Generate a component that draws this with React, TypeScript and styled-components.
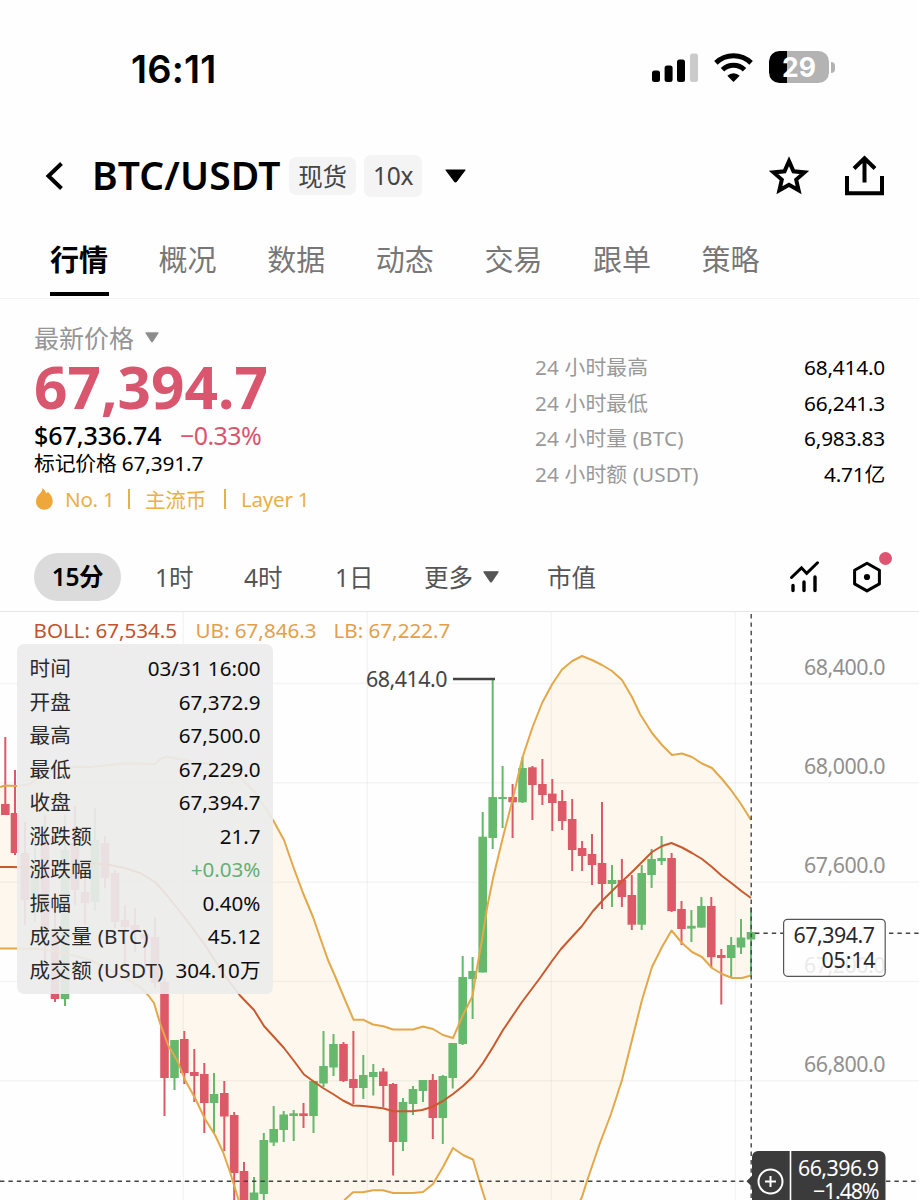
import React from "react";
import styled, { createGlobalStyle } from "styled-components";

const latin = `"Noto Sans", "Noto Sans CJK SC", sans-serif`;
const PINK = "#d9566f";
const UP = "#65b86c";
const DOWN = "#dc5a68";
const BAND = "#e3a849";
const MID = "#c85a2d";

const Global = createGlobalStyle`
  * { box-sizing: border-box; }
  body { margin: 0; background: #fefefe; font-family: ${latin}; }
`;

const Screen = styled.main`
  width: 919px;
  height: 1200px;
  overflow: hidden;
  display: flex;
  flex-direction: column;
  background: #fefefe;
  color: #000;
  white-space: nowrap;
`;

const StatusBar = styled.header`
  height: 136px;
  display: flex;
  align-items: center;
  justify-content: space-between;
  padding: 0 90px 0 131px;
`;

const Clock = styled.span`
  padding-top: 1px;
  font: 600 38px/40px Inter, sans-serif;
  letter-spacing: 0.2px;
`;

const StatusIcons = styled.div`
  display: flex;
  align-items: center;
  gap: 16px;
`;

const Battery = styled.div`
  position: relative;
  width: 60px;
  height: 32px;
  margin-top: -2px;
  border-radius: 10.5px;
  background: linear-gradient(90deg, #000 18px, #b3b3b3 18px);
  color: #fff;
  text-align: center;
  font: 700 26.5px/32px Inter, sans-serif;
  &::after {
    content: "";
    position: absolute;
    left: 62px;
    top: 11px;
    width: 3.5px;
    height: 11px;
    border-radius: 0 5px 5px 0;
    background: #b3b3b3;
  }
`;

const TitleBar = styled.div`
  height: 80px;
  display: flex;
  align-items: center;
  padding: 0 35px 1px 45px;
`;

const Pair = styled.h1`
  margin: 0 10px 0 28px;
  width: 187px;
  padding-bottom: 2px;
  font: 600 39px/50px ${latin};
  letter-spacing: 0.1px;
`;

const Badge = styled.span<{ $w: number; $h: number }>`
  width: ${(p) => p.$w}px;
  height: ${(p) => p.$h}px;
  margin-right: 8px;
  padding-bottom: 1px;
  border-radius: 7px;
  background: #f4f4f4;
  color: #444;
  display: flex;
  align-items: center;
  justify-content: center;
  font-size: 24.5px;
  letter-spacing: -0.3px;
`;

const HeaderCaret = styled.span`
  display: flex;
  margin-left: 15px;
`;

const Actions = styled.div`
  margin-left: auto;
  display: flex;
  gap: 36px;
`;

const Tabs = styled.nav`
  height: 83px;
  display: flex;
  gap: 50px;
  padding-left: 50px;
  border-bottom: 1px solid #f2f2f2;
`;

const Tab = styled.a<{ $active?: boolean }>`
  width: 58.6px;
  height: 80px;
  padding-top: 22px;
  font-size: 29px;
  line-height: 44px;
  font-weight: ${(p) => (p.$active ? 700 : 400)};
  color: ${(p) => (p.$active ? "#000" : "#777")};
  border-bottom: 4px solid ${(p) => (p.$active ? "#000" : "transparent")};
`;

const Summary = styled.section`
  height: 243px;
  display: flex;
  justify-content: space-between;
  padding: 21px 34px 0;
`;

const PriceColumn = styled.div`
  display: flex;
  flex-direction: column;
`;

const PriceLabel = styled.div`
  display: flex;
  align-items: center;
  gap: 11px;
  height: 34px;
  font-size: 25px;
  color: #959595;
`;

const Price = styled.div`
  height: 67px;
  font-size: 58.5px;
  line-height: 65px;
  font-weight: 700;
  letter-spacing: 0;
  color: ${PINK};
`;

const Fiat = styled.div`
  display: flex;
  gap: 18.5px;
  height: 29px;
  line-height: 29px;
  font-size: 25px;
  font-weight: 500;
  letter-spacing: -0.05px;
`;

const Change = styled.span`
  color: ${PINK};
  font-weight: 400;
  letter-spacing: -0.6px;
`;

const Mark = styled.div`
  height: 28px;
  line-height: 27px;
  font-size: 20.8px;
  letter-spacing: -0.15px;
`;

const Tags = styled.div`
  display: flex;
  align-items: center;
  height: 42px;
  font-size: 20.6px;
  letter-spacing: -0.25px;
  color: #e9b045;
`;

const TagText = styled.span<{ $w: number }>`
  width: ${(p) => p.$w}px;
`;

const TagRule = styled.i`
  width: 2px;
  height: 20px;
  margin: 0 15.5px;
  background: #e9b045;
`;

const Stats = styled.dl`
  width: 350px;
  margin: 30px 0 0;
`;

const Stat = styled.div`
  display: flex;
  justify-content: space-between;
  height: 35.5px;
  line-height: 35px;
  font-size: 20.8px;
`;

const StatName = styled.dt`
  color: #999;
  letter-spacing: 0.1px;
`;

const StatValue = styled.dd`
  margin: 0;
  letter-spacing: -0.2px;
`;

const Periods = styled.nav`
  height: 70px;
  display: flex;
  align-items: center;
  padding: 0 37px 0 34px;
  border-bottom: 1px solid #e6e6e6;
  font-size: 24.5px;
  color: #555;
`;

const ActivePeriod = styled.span`
  width: 87px;
  height: 48px;
  border-radius: 24px;
  background: #dbdbdb;
  color: #000;
  font-weight: 600;
  line-height: 47px;
  text-align: center;
  letter-spacing: -0.3px;
`;

const Period = styled.span<{ $left: number; $w: number }>`
  margin-left: ${(p) => p.$left}px;
  width: ${(p) => p.$w}px;
  display: flex;
  align-items: center;
  gap: 10px;
`;

const ChartTools = styled.div`
  margin-left: auto;
  display: flex;
  gap: 32px;
`;

const ToolWithDot = styled.span`
  position: relative;
  display: flex;
  &::after {
    content: "";
    position: absolute;
    right: -10px;
    top: -9px;
    width: 13px;
    height: 13px;
    border-radius: 50%;
    background: #dc5573;
  }
`;

const ChartArea = styled.section`
  position: relative;
  height: 588px;
  svg { display: block; }
`;

const Legend = styled.div`
  position: absolute;
  left: 33.5px;
  top: 4px;
  display: flex;
  height: 28px;
  line-height: 28px;
  font-size: 20.6px;
`;

const LegendItem = styled.span<{ $color: string; $w: number }>`
  width: ${(p) => p.$w}px;
  color: ${(p) => p.$color};
`;

const Panel = styled.div`
  position: absolute;
  left: 17px;
  top: 32px;
  width: 256px;
  height: 350px;
  padding: 8px 12.5px 0;
  border-radius: 7px;
  background: rgba(236, 236, 236, 0.92);
`;

const PanelRow = styled.div`
  display: flex;
  justify-content: space-between;
  height: 33.5px;
  line-height: 33.5px;
  font-size: 20.6px;
  color: #2a2a2a;
`;

const PanelName = styled.span`
  letter-spacing: 0.25px;
`;

const PanelValue = styled.span<{ $color?: string }>`
  color: ${(p) => p.$color ?? "#0c0c0c"};
`;

const Caret = ({ w, h, color }: { w: number; h: number; color: string }) => (
  <svg width={w} height={h} viewBox="0 0 20 14" preserveAspectRatio="none">
    <path d="M1 1h18L10.8 12.4q-.8 1-1.6 0Z" fill={color} stroke={color} strokeWidth="1.2" strokeLinejoin="round" />
  </svg>
);

// center x, wick top, body top, body bottom, wick bottom, rising
type Candle = [number, number, number, number, number, 0 | 1];
const candles: Candle[] = [
  [5.3, 737, 804, 815, 815, 0], [15, 770, 813, 853, 855, 0], [25, 822, 853, 900, 925, 0],
  [35, 835, 868, 900, 922, 1], [45, 815, 840, 935, 960, 0], [55, 900, 932, 999, 1002, 0],
  [65, 815, 850, 999, 1006, 1], [75, 806, 843, 890, 905, 0], [85, 878, 892, 903, 925, 0],
  [95, 808, 840, 902, 911, 1], [105, 836, 843, 878, 888, 0], [115, 870, 873, 922, 928, 0],
  [125, 905, 920, 927, 965, 0], [135, 908, 925, 932, 952, 0], [145, 930, 934, 939, 975, 0],
  [155, 917, 937, 983, 988, 0], [164.5, 978, 982, 1078, 1116, 0], [174.5, 1040, 1040, 1078, 1090, 1],
  [184.3, 1031, 1039, 1073, 1084, 0], [194.3, 1049, 1072, 1076, 1102, 0], [204.3, 1063, 1074, 1103, 1133, 0],
  [214, 1073, 1094, 1103, 1134, 1], [224.3, 1081, 1093, 1116.5, 1151, 0], [234.2, 1112, 1115, 1173, 1204, 0],
  [244, 1162, 1171, 1210, 1210, 0], [254, 1177, 1192.5, 1210, 1210, 1], [263.8, 1133, 1140, 1194, 1210, 1],
  [273.7, 1106, 1129, 1142.5, 1146, 1], [283.7, 1111, 1114.5, 1130, 1142, 1], [293.7, 1110, 1113.3, 1116, 1141, 1],
  [303.5, 1103, 1113.3, 1116, 1128, 0], [313.5, 1081, 1081, 1116, 1133, 1], [323.5, 1031, 1066, 1083.5, 1087, 1],
  [333.5, 1034, 1044, 1067.5, 1076, 1], [343.5, 1042, 1044, 1081, 1082, 0], [353.4, 1031, 1079, 1088, 1104, 0],
  [363.3, 1055, 1075, 1088, 1099, 1], [373.3, 1064, 1072, 1077, 1095.5, 1], [383.3, 1068, 1071.5, 1086, 1107, 0],
  [393.1, 1083, 1084, 1142, 1175.5, 0], [403, 1098, 1102, 1142, 1151, 1], [413, 1086, 1089, 1104, 1115, 1],
  [423, 1080, 1080, 1091, 1102, 1], [432.8, 1074, 1080, 1118, 1139, 0], [442.8, 1075, 1076, 1118, 1144, 1],
  [452.7, 1043, 1043, 1078, 1088.5, 1], [462.7, 956, 977, 1044, 1045, 1], [472.6, 957, 971, 979, 1019, 1],
  [482.7, 812, 836.7, 972.5, 972.5, 1], [492.7, 679, 797, 838, 849, 1], [502.6, 766, 797, 799, 828, 1],
  [512.6, 784, 797, 802.3, 838, 0], [522.5, 757, 768, 802.3, 803, 1], [532.4, 766, 767.3, 785, 820, 0],
  [542.4, 759, 784, 795, 805, 0], [552.3, 779, 793.6, 803, 831, 0], [562.2, 790, 801, 821, 830, 0],
  [572.2, 799, 819, 850, 871, 0], [582.1, 841, 848, 856, 871, 0], [592, 834, 854, 865, 885, 0],
  [602, 802, 863, 884, 909, 0], [612, 865, 880, 884, 907, 1], [621.9, 859, 880, 897, 907, 0],
  [631.8, 875, 895, 924.7, 930, 0], [641.7, 865, 873, 924.7, 930, 1], [651.6, 849, 859, 875, 888, 1],
  [661.6, 836, 858, 861, 865, 1], [671.6, 853, 858, 911, 912, 0], [681.5, 901, 909, 929, 945, 0],
  [691.4, 910, 925.8, 928.6, 942, 1], [701.4, 897, 906, 927.6, 927.6, 1], [711.3, 897, 906, 957.2, 968, 0],
  [721.3, 949, 955, 958, 1004.5, 0], [731.2, 937, 945, 958, 978, 1], [741, 919, 937.5, 947.5, 954, 1],
  [751, 907, 932, 939.5, 977, 1],
];

const upper =
  "0,787 5,785.5 17,786 30,784 45,772 60,768 75,767 90,767 110,765 125,763.5 155,764 160,759 167,756.5 178,759 195,762 215,764 235,772 255,792 273,820 284,840 293,866 303,893 313,917 322,943 328,960 335,976 340,988 353.5,1019.7 363,1019.7 373,1024.5 383.5,1026.3 393,1029.5 413,1029.5 423,1026.5 433,1029 443,1035 453,1038 463,1015 472.5,996 477,968 482,940 487,908 493.3,877 503,837 512.5,800 522.3,758 532.4,727.5 542.3,702.5 552,684.5 562,669.5 572.3,661 582,656 592,660 602,665 612,671 622,680 632,697 640,714 652,733 662,745 672,755 682,753.5 692,757 702,763.5 712,768 722,779 731,790 741,804 751,820";
const middle =
  "0,867 12,867 30,867.5 60,864 90,863 110,865 125,868 140,873 155,882 165,893 185,918 205,945 225,976 240,995.5 254,1010 264,1026 274,1037 284,1048 294,1061 304,1074.5 313,1081 323,1088 333,1094 343,1100.5 353,1105.5 363,1106 383,1108.3 393,1111.3 412,1111.3 422,1110 432,1107 443,1101 453,1094 463,1086 473,1076.5 483,1063 493,1047 503,1030 522,1002 540,978 552,961 561,949 571,938 582,926 593,911 603,900 613,890 632,872 642,862 652,852 662,846 671.5,843 682,847.5 692,853 702,859 712,867 722,876 732,883.5 742,891.5 751,898";
const lower =
  "0,948.5 17,948.5 40,949 60,952 90,960 120,975 140,987 148,995 154,1003 160,1023 168,1045 178,1062 185,1080 195,1098 205,1119 215,1135 223,1152 230,1172 238,1198 243,1215 335,1215 345,1199.5 353,1192.3 363,1192.3 373,1190.3 383,1190.3 393,1193 413,1193 423,1192 433,1184 443,1167 453,1148 463,1155 473,1159.5 479,1180 485,1199 490,1215 573,1215 582,1197 587,1181 600,1143 611,1114 622,1080 632,1040 642,1000 652,967 662,947 671.5,930.5 682,943 692,952 702,957 712,968 722,974 732,978 742,978 751,975.5";
const band = `${upper} ${lower.split(" ").reverse().join(" ")}`;

const axis: [string, number][] = [
  ["68,400.0", 683.5], ["68,000.0", 782.7], ["67,600.0", 882.2], ["67,200.0", 981.5], ["66,800.0", 1080.8],
];

const Label = styled.text<{ $color: string }>`
  font: 400 21.4px ${latin};
  fill: ${(p) => p.$color};
`;

const Chart = () => (
  <svg width="919" height="588" viewBox="0 612 919 588">
    <polygon points={band} fill="#fef7ee" />
    {axis.map(([t, y]) => (
      <line key={t} x1="0" x2="919" y1={y} y2={y} stroke="#000" strokeOpacity=".04" strokeWidth="1.4" />
    ))}
    {[183.3, 367.3, 551.4, 735.4].map((x) => (
      <line key={x} x1={x} x2={x} y1="612" y2="1200" stroke="#000" strokeOpacity=".04" strokeWidth="1.4" />
    ))}
    {candles.map(([x, t, a, b, l, up]) => (
      <g key={x} fill={up ? UP : DOWN}>
        <rect x={x - 1} y={t} width="2" height={l - t} />
        <rect x={x - 4.3} y={a} width="8.6" height={b - a} />
      </g>
    ))}
    <g fill="none" strokeWidth="2" strokeLinejoin="round">
      <polyline points={upper} stroke={BAND} />
      <polyline points={lower} stroke={BAND} />
      <polyline points={middle} stroke={MID} />
    </g>
    <path d="M453 679h42" stroke="#444" strokeWidth="2.4" />
    <Label $color="#444" x="366" y="686.5" textLength="81.5">68,414.0</Label>
    {axis.map(([t, y]) => (
      <Label key={t} $color="#909090" x="804" y={y - 9} textLength="81.5">{t}</Label>
    ))}
    <g stroke="#444" strokeWidth="1.4" strokeDasharray="4.4 4">
      <path d="M751.2 614V1200" />
      <path d="M755 933.3H783M889 933.3H919" />
      <path d="M0 1181.3H750M886 1181.3H919" />
    </g>
    <rect x="783.6" y="919.3" width="101.6" height="57" rx="4" fill="#fefefe" fillOpacity=".82" stroke="#555" strokeWidth="1.2" />
    <Label $color="#2a2a2a" x="793.5" y="942.5" textLength="81.5">67,394.7</Label>
    <Label $color="#2a2a2a" x="821.5" y="967.5" textLength="54">05:14</Label>
    <path d="M746.5 1181.3l6-6v12Z" fill="#3b3b3b" />
    <path d="M752 1210v-53a6 6 0 0 1 6-6h121.5a6 6 0 0 1 6 6v53Z" fill="#3b3b3b" />
    <path d="M790.5 1151v49" stroke="#fff" strokeWidth="1.6" />
    <g fill="none" stroke="#fff" strokeWidth="2">
      <circle cx="770.5" cy="1181.5" r="12" />
      <path d="M765 1181.5h11M770.5 1176v11" />
    </g>
    <Label $color="#fff" x="798" y="1175.5" textLength="81">66,396.9</Label>
    <Label $color="#fff" x="813" y="1199" textLength="66.5">−1.48%</Label>
  </svg>
);

const tabs = ["行情", "概况", "数据", "动态", "交易", "跟单", "策略"];
const stats = [
  ["24 小时最高", "68,414.0"],
  ["24 小时最低", "66,241.3"],
  ["24 小时量 (BTC)", "6,983.83"],
  ["24 小时额 (USDT)", "4.71亿"],
];
const details: [string, string, string?][] = [
  ["时间", "03/31 16:00"],
  ["开盘", "67,372.9"],
  ["最高", "67,500.0"],
  ["最低", "67,229.0"],
  ["收盘", "67,394.7"],
  ["涨跌额", "21.7"],
  ["涨跌幅", "+0.03%", "#63b076"],
  ["振幅", "0.40%"],
  ["成交量 (BTC)", "45.12"],
  ["成交额 (USDT)", "304.10万"],
];

export default function App() {
  return (
    <Screen>
      <Global />
      <StatusBar>
        <Clock>16:11</Clock>
        <StatusIcons>
          <svg width="46" height="30" viewBox="0 0 46 30">
            <rect x="0" y="17.5" width="8" height="11.5" rx="2.5" />
            <rect x="12.6" y="12.5" width="8" height="16.5" rx="2.5" />
            <rect x="25" y="6.5" width="8" height="22.5" rx="2.5" />
            <rect x="38" y=".5" width="8" height="28.5" rx="2.5" fill="#cbcbcb" />
          </svg>
          <svg width="39" height="30" viewBox="0 0 39 30">
            <g fill="none" stroke="#000" strokeWidth="5">
              <path d="M1.9 9.9a25.3 25.3 0 0 1 35.2 0" />
              <path d="M8.5 16.8a15.8 15.8 0 0 1 22 0" />
            </g>
            <path d="M19.5 29l-6.2-6.200a8.800 8.800 0 0 1 12.4 0Z" />
          </svg>
          <Battery>29</Battery>
        </StatusIcons>
      </StatusBar>

      <TitleBar>
        <svg width="19" height="28" viewBox="0 0 19 28">
          <path d="M16.5 1.5 3.5 14l13 12.5" fill="none" stroke="#000" strokeWidth="4" />
        </svg>
        <Pair>BTC/USDT</Pair>
        <Badge $w={67} $h={38}>现货</Badge>
        <Badge $w={58} $h={42}>10x</Badge>
        <HeaderCaret>
          <Caret w={21} h={14} color="#000" />
        </HeaderCaret>
        <Actions>
          <svg width="40" height="42" viewBox="0 0 40 42">
            <path
              d="M20 5.300l4.500 10.200 10.900 1.100-8.200 7.200 2.400 10.700L20 28.900l-9.600 5.600 2.400-10.700-8.200-7.200 10.900-1.100Z"
              transform="translate(0 .8)"
              fill="none"
              stroke="#000"
              strokeWidth="4"
              strokeMiterlimit="10"
            />
          </svg>
          <svg width="39" height="42" viewBox="0 0 39 42">
            <path d="M2 21v17.300h35V21M19.500 27.500V3.500M9 13.500 19.500 3.300 30 13.500" fill="none" stroke="#000" strokeWidth="4" />
          </svg>
        </Actions>
      </TitleBar>

      <Tabs>
        {tabs.map((t, i) => (
          <Tab key={t} $active={i === 0}>{t}</Tab>
        ))}
      </Tabs>

      <Summary>
        <PriceColumn>
          <PriceLabel>
            最新价格
            <Caret w={14} h={11} color="#8c8c8c" />
          </PriceLabel>
          <Price>67,394.7</Price>
          <Fiat>
            <span>$67,336.74</span>
            <Change>−0.33%</Change>
          </Fiat>
          <Mark>标记价格 67,391.7</Mark>
          <Tags>
            <svg width="31" height="24" viewBox="0 0 31 24">
              <path
                d="M8.500 1c2 1.700 3 3.300 3.700 5.300.9-.2 1.300-.8 1.600-1.500 3.300 3.200 4.900 6 4.900 9.300 0 5-3.500 8.600-8.400 8.600S2 19.200 2 14.500c0-3.600 1.800-5.600 3.700-7.700C7.200 5.100 8.300 3.400 8.500 1Z"
                fill="#efa73c"
              />
            </svg>
            <TagText $w={47}>No. 1</TagText>
            <TagRule />
            <TagText $w={63}>主流币</TagText>
            <TagRule />
            <TagText $w={70}>Layer 1</TagText>
          </Tags>
        </PriceColumn>
        <Stats>
          {stats.map(([k, v]) => (
            <Stat key={k}>
              <StatName>{k}</StatName>
              <StatValue>{v}</StatValue>
            </Stat>
          ))}
        </Stats>
      </Summary>

      <Periods>
        <ActivePeriod>15分</ActivePeriod>
        <Period $left={34} $w={38}>1时</Period>
        <Period $left={51} $w={39}>4时</Period>
        <Period $left={52} $w={37}>1日</Period>
        <Period $left={52} $w={75}>
          更多
          <Caret w={16} h={12} color="#555" />
        </Period>
        <Period $left={48} $w={50}>市值</Period>
        <ChartTools>
          <svg width="31" height="32" viewBox="0 0 31 32">
            <g fill="none" stroke="#000">
              <path d="M2.500 16.500 12.500 6.800l5.200 5.600L28.500 1.800" strokeWidth="3" strokeLinecap="round" />
              <path d="M4 24.500v5M15 21v8.500M26 16v13.500" strokeWidth="3.400" strokeLinecap="round" />
            </g>
          </svg>
          <ToolWithDot>
            <svg width="30" height="32" viewBox="0 0 30 32">
              <path d="M15 2.200 27.400 9.300v13.600L15 29.900 2.600 22.900V9.300Z" fill="none" stroke="#000" strokeWidth="3" strokeLinejoin="round" />
              <circle cx="15" cy="16" r="3.100" />
            </svg>
          </ToolWithDot>
        </ChartTools>
      </Periods>

      <ChartArea>
        <Chart />
        <Legend>
          <LegendItem $color="#c2532f" $w={162}>BOLL: 67,534.5</LegendItem>
          <LegendItem $color="#e3a04a" $w={138}>UB: 67,846.3</LegendItem>
          <LegendItem $color="#e3a04a" $w={120}>LB: 67,222.7</LegendItem>
        </Legend>
        <Panel>
          {details.map(([k, v, c]) => (
            <PanelRow key={k}>
              <PanelName>{k}</PanelName>
              <PanelValue $color={c}>{v}</PanelValue>
            </PanelRow>
          ))}
        </Panel>
      </ChartArea>
    </Screen>
  );
}
